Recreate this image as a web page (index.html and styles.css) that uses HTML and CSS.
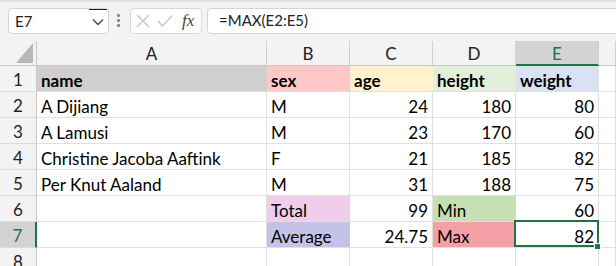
FILE: index.html
```html
<!DOCTYPE html>
<html lang="en">
<head>
    <meta charset="UTF-8">
    <meta name="viewport" content="width=device-width, initial-scale=1.0">
    <link rel="stylesheet" href="styles.css">
    <title>Sheet</title>
</head>
<body>
    <div class="toolbar">
        <div class="name-box">
            <span>E7</span>
            <div class="drop">
                <svg width="12" height="8" viewBox="0 0 12 8"><path d="M1 1.5 L6 6.5 L11 1.5" fill="none" stroke="#444" stroke-width="1.3"/></svg>
            </div>
        </div>
        <div class="dots"><i></i><i></i><i></i></div>
        <div class="fx-box">
            <svg width="14" height="14" viewBox="0 0 14 14"><path d="M1 1 L13 13 M13 1 L1 13" stroke="#c4c4c4" stroke-width="1.2"/></svg>
            <svg width="16" height="14" viewBox="0 0 16 14"><path d="M1 7 L5.5 12 L15 1.5" fill="none" stroke="#c4c4c4" stroke-width="1.2"/></svg>
            <span class="fx">fx</span>
        </div>
        <div class="formula">=MAX(E2:E5)</div>
    </div>

    <div class="sheet">
        <div class="hdr corner">
            <svg width="17" height="20" viewBox="0 0 17 20"><polygon points="0,20 17,20 17,0" fill="#b8b8b8"/></svg>
        </div>
        <div class="hdr col">A</div>
        <div class="hdr col">B</div>
        <div class="hdr col">C</div>
        <div class="hdr col">D</div>
        <div class="hdr col sel-col">E</div>
        <div class="hdr col"></div>

        <div class="hdr row">1</div>
        <div class="cell b bg-grey">name</div>
        <div class="cell b bg-rose">sex</div>
        <div class="cell b bg-cream">age</div>
        <div class="cell b bg-mint">height</div>
        <div class="cell b bg-blue">weight</div>
        <div class="cell"></div>

        <div class="hdr row">2</div>
        <div class="cell">A Dijiang</div>
        <div class="cell">M</div>
        <div class="cell num">24</div>
        <div class="cell num">180</div>
        <div class="cell num">80</div>
        <div class="cell"></div>

        <div class="hdr row">3</div>
        <div class="cell">A Lamusi</div>
        <div class="cell">M</div>
        <div class="cell num">23</div>
        <div class="cell num">170</div>
        <div class="cell num">60</div>
        <div class="cell"></div>

        <div class="hdr row">4</div>
        <div class="cell">Christine Jacoba Aaftink</div>
        <div class="cell">F</div>
        <div class="cell num">21</div>
        <div class="cell num">185</div>
        <div class="cell num">82</div>
        <div class="cell"></div>

        <div class="hdr row">5</div>
        <div class="cell">Per Knut Aaland</div>
        <div class="cell">M</div>
        <div class="cell num">31</div>
        <div class="cell num">188</div>
        <div class="cell num">75</div>
        <div class="cell"></div>

        <div class="hdr row">6</div>
        <div class="cell"></div>
        <div class="cell bg-orchid">Total</div>
        <div class="cell num">99</div>
        <div class="cell bg-green">Min</div>
        <div class="cell num">60</div>
        <div class="cell"></div>

        <div class="hdr row sel-row">7</div>
        <div class="cell"></div>
        <div class="cell bg-lavender">Average</div>
        <div class="cell num">24.75</div>
        <div class="cell bg-red">Max</div>
        <div class="cell num active">82</div>
        <div class="cell"></div>

        <div class="hdr row">8</div>
        <div class="cell"></div>
        <div class="cell"></div>
        <div class="cell"></div>
        <div class="cell"></div>
        <div class="cell"></div>
        <div class="cell"></div>
    </div>
</body>
</html>
```

FILE: styles.css
```css
body {
    margin: 0;
    font-family: Lato, "Liberation Sans", sans-serif;
    background-color: #f3f3f3;
    width: 616px;
    height: 266px;
    overflow: hidden;
}

.toolbar {
    height: 41px;
    box-sizing: border-box;
    border-top: 2px solid #e4e4e4;
    padding: 6px 0 0 8px;
    display: flex;
    align-items: flex-start;
}

.name-box {
    width: 101px;
    height: 26px;
    box-sizing: border-box;
    background-color: #fff;
    border: 1px solid #d4d4d4;
    border-radius: 4px;
    display: flex;
    align-items: center;
    justify-content: space-between;
    padding-left: 6px;
    font-size: 15px;
    color: #222;
}

.drop {
    width: 18px;
    height: 24px;
    margin-right: 1px;
    align-self: flex-start;
    border-top: 1px solid #222;
    display: flex;
    align-items: center;
    justify-content: center;
}

.dots {
    width: 4px;
    margin: 6px 9px 0 8px;
    display: flex;
    flex-direction: column;
    gap: 2px;
}

.dots i {
    width: 3px;
    height: 3px;
    background-color: #8a8a8a;
    border-radius: 1px;
}

.fx-box {
    width: 72px;
    height: 26px;
    box-sizing: border-box;
    background-color: #fff;
    border: 1px solid #d8d8d8;
    border-radius: 4px;
    display: flex;
    align-items: center;
    padding-left: 5px;
    gap: 7px;
}

.fx {
    font-family: "Liberation Serif", serif;
    font-style: italic;
    font-size: 17px;
    color: #444;
    margin-left: 2px;
}

.formula {
    flex: 1;
    height: 26px;
    box-sizing: border-box;
    margin-left: 5px;
    margin-right: -6px;
    background-color: #fff;
    border: 1px solid #d4d4d4;
    border-radius: 4px 0 0 4px;
    padding-left: 11px;
    font-size: 15px;
    line-height: 23px;
    color: #222;
}

.sheet {
    display: grid;
    grid-template-columns: 37px 230px 83px 83px 83px 83px 1fr;
    grid-template-rows: 25px;
    grid-auto-rows: 26px;
    background-color: #fff;
    font-size: 17px;
}

.hdr {
    background-color: #f3f3f3;
    box-sizing: border-box;
    border-right: 1px solid #c8c8c8;
    border-bottom: 1px solid #c8c8c8;
    display: flex;
    align-items: center;
    justify-content: center;
    color: #222;
}

.corner {
    align-items: flex-end;
    justify-content: flex-end;
    padding: 0 3px 2px 0;
    border-right-color: #c8c8c8;
}

.col {
    border-right-color: #d0d0d0;
    padding-top: 1px;
}

.row {
    border-bottom-color: #dcdcdc;
    padding-top: 2px;
}

.sel-col {
    background-color: #d3d3d3;
    border-bottom: 2px solid #217346;
    color: #217346;
}

.sel-row {
    background-color: #d3d3d3;
    border-right: 2px solid #217346;
    color: #217346;
}

.cell {
    box-sizing: border-box;
    border-right: 1px solid #e0e0e0;
    border-bottom: 1px solid #e0e0e0;
    padding: 3px 4px 0 4px;
    display: flex;
    align-items: center;
    color: #000;
    white-space: nowrap;
}

.b {
    font-weight: bold;
}

.num {
    justify-content: flex-end;
}

.bg-grey { background-color: #d0cece; border-right-color: #d0cece; }
.bg-rose { background-color: #ffc7c7; border-right-color: #ffc7c7; }
.bg-cream { background-color: #fff2cc; border-right-color: #fff2cc; }
.bg-mint { background-color: #e2efda; border-right-color: #e2efda; }
.bg-blue { background-color: #d9e1f2; }
.bg-orchid { background-color: #efcdeb; border-right-color: #efcdeb; }
.bg-lavender { background-color: #c4c2e6; border-right-color: #c4c2e6; }
.bg-green { background-color: #c6e0b4; border-right-color: #c6e0b4; }
.bg-red { background-color: #f4a0a6; border-right-color: #f4a0a6; }

.active {
    position: relative;
}

.active::after {
    content: "";
    position: absolute;
    left: -2px;
    top: -2px;
    right: -1px;
    bottom: 0;
    border: 2px solid #217346;
}

.active::before {
    content: "";
    position: absolute;
    right: -3px;
    bottom: -3px;
    width: 5px;
    height: 5px;
    background-color: #217346;
    border: 1px solid #fff;
    z-index: 1;
}
```
